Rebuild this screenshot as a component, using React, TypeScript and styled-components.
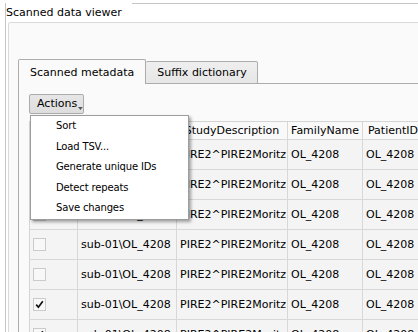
import styled, { createGlobalStyle } from "styled-components";

const GlobalStyle = createGlobalStyle`
  html, body {
    margin: 0;
    padding: 0;
    background: #ffffff;
  }
  body {
    font-family: "DejaVu Sans", "Liberation Sans", sans-serif;
    font-size: 11px;
    color: #000000;
  }
`;

const Screen = styled.div`
  width: 418px;
  height: 332px;
  overflow: hidden;
  background: #ffffff;
`;

const Dock = styled.section`
  margin: 3px 0 0 5px;
  width: 440px;
  height: 340px;
  border-left: 1px solid #c6c6c6;
  display: flex;
  flex-direction: column;
`;

const TitleBar = styled.header`
  display: flex;
  height: 19px;
  align-items: flex-start;
`;

const Title = styled.span`
  line-height: 19px;
  white-space: nowrap;
  padding-right: 10px;
`;

const TitleRule = styled.div`
  flex: 1;
  border-top: 1px solid #c6c6c6;
`;

const Frame = styled.div`
  margin-left: 2px;
  flex: 1;
  border: 1px solid #dadada;
  border-radius: 2px;
  background: #fafafa;
  padding: 36px 0 0 9px;
  display: flex;
  flex-direction: column;
`;

const TabBar = styled.div`
  display: flex;
  align-items: flex-end;
  height: 25px;
`;

const Tab = styled.div<{ $active?: boolean }>`
  box-sizing: border-box;
  height: ${(p) => (p.$active ? "25px" : "23px")};
  padding: ${(p) => (p.$active ? "0 11px" : "0 10px 0 11px")};
  line-height: ${(p) => (p.$active ? "25px" : "21px")};
  border: 1px solid #acacac;
  border-bottom: ${(p) => (p.$active ? "none" : "1px solid #acacac")};
  border-left: ${(p) => (p.$active ? "1px solid #acacac" : "none")};
  border-radius: 2px 2px 0 0;
  background: ${(p) => (p.$active ? "#fafafa" : "linear-gradient(#efefef, #e6e6e6)")};
  white-space: nowrap;
`;

const TabRule = styled.div`
  flex: 1;
  height: 1px;
  background: #acacac;
`;

const Pane = styled.div`
  flex: 1;
  border-left: 1px solid #acacac;
  padding: 10px 0 0 10px;
  display: flex;
  flex-direction: column;
`;

const Toolbar = styled.div`
  position: relative;
  height: 20px;
`;

const ActionsButton = styled.button`
  box-sizing: border-box;
  width: 55px;
  height: 20px;
  padding: 0 0 0 7px;
  display: flex;
  align-items: center;
  border: 1px solid #acacac;
  border-radius: 2px;
  background: linear-gradient(#e6e6e6, #dddddd);
  font: inherit;
  color: #000000;
  line-height: 18px;
  text-align: left;

  svg {
    margin: 8px 0 0 1px;
  }
`;

const Menu = styled.ul`
  position: absolute;
  left: 1px;
  top: 21px;
  z-index: 5;
  box-sizing: border-box;
  width: 159px;
  margin: 0;
  padding: 0;
  list-style: none;
  background: #ffffff;
  border: 1px solid #9d9d9d;
  box-shadow: 2px 2px 3px rgba(0, 0, 0, 0.35);
  font-size: 10px;
  letter-spacing: -0.15px;
`;

const MenuItem = styled.li`
  height: 20.5px;
  line-height: 20.5px;
  padding-left: 25px;
  white-space: nowrap;
`;

const Table = styled.div`
  margin-top: 7px;
  border-left: 1px solid #d4d4d4;
  border-top: 1px solid #d4d4d4;
  background: #f4f4f4;
`;

const Row = styled.div<{ $header?: boolean }>`
  display: flex;
  height: ${(p) => (p.$header ? "18px" : "30px")};
  background: ${(p) => (p.$header ? "#f9f9f9" : "#f4f4f4")};
`;

const Cell = styled.div<{ $w: number; $header?: boolean }>`
  box-sizing: border-box;
  flex: 0 0 ${(p) => p.$w}px;
  display: flex;
  align-items: center;
  justify-content: ${(p) => (p.$header ? "center" : "flex-start")};
  padding-left: ${(p) => (p.$header ? "0" : "3px")};
  border-right: 1px solid #d8d8d8;
  border-bottom: 1px solid #d8d8d8;
  white-space: nowrap;
  overflow: hidden;
`;

const Check = styled.span`
  box-sizing: border-box;
  width: 13px;
  height: 13px;
  border: 1px solid #cbcbcb;
  background: #f8f8f8;
  display: flex;
  align-items: center;
  justify-content: center;
`;

const widths = [48, 99, 111, 75, 61, 80];
const headers = ["", "Subject", "StudyDescription", "FamilyName", "PatientID", "PatientSex"];
const checked = [false, false, false, false, false, true, true];
const menuItems = ["Sort", "Load TSV...", "Generate unique IDs", "Detect repeats", "Save changes"];

function CheckBox({ on }: { on: boolean }) {
  return (
    <Check>
      {on && (
        <svg width="9" height="9" viewBox="0 0 9 9">
          <path d="M1.2 4.6 L3.4 7.2 L7.8 1.3" fill="none" stroke="#111" strokeWidth="1.7" />
        </svg>
      )}
    </Check>
  );
}

export default function App() {
  return (
    <Screen>
      <GlobalStyle />
      <Dock>
        <TitleBar>
          <Title>Scanned data viewer</Title>
          <TitleRule />
        </TitleBar>
        <Frame>
          <TabBar>
            <Tab $active>Scanned metadata</Tab>
            <Tab>Suffix dictionary</Tab>
            <TabRule />
          </TabBar>
          <Pane>
            <Toolbar>
              <ActionsButton>
                Actions
                <svg width="5" height="3" viewBox="0 0 5 3">
                  <path d="M0 0 L5 0 L2.5 3 Z" fill="#555" />
                </svg>
              </ActionsButton>
              <Menu>
                {menuItems.map((m) => (
                  <MenuItem key={m}>{m}</MenuItem>
                ))}
              </Menu>
            </Toolbar>
            <Table>
              <Row $header>
                {headers.map((h, i) => (
                  <Cell key={i} $w={widths[i]} $header>
                    {h}
                  </Cell>
                ))}
              </Row>
              {checked.map((on, r) => (
                <Row key={r}>
                  <Cell $w={widths[0]}>
                    <CheckBox on={on} />
                  </Cell>
                  <Cell $w={widths[1]}>sub-01\OL_4208</Cell>
                  <Cell $w={widths[2]}>PIRE2^PIRE2Moritz</Cell>
                  <Cell $w={widths[3]}>OL_4208</Cell>
                  <Cell $w={widths[4]}>OL_4208</Cell>
                  <Cell $w={widths[5]}>M</Cell>
                </Row>
              ))}
            </Table>
          </Pane>
        </Frame>
      </Dock>
    </Screen>
  );
}
